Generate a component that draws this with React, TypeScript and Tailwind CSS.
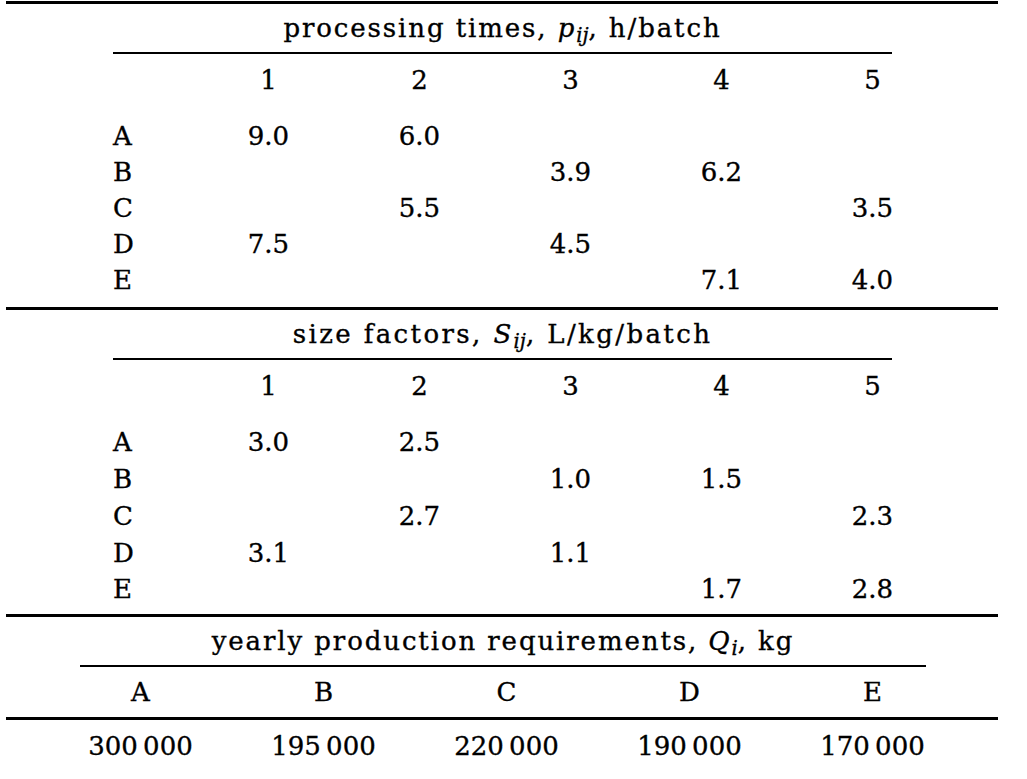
import React from "react";

type Row = { label: string; values: string[] };

const processing: Row[] = [
  { label: "A", values: ["9.0", "6.0", "", "", ""] },
  { label: "B", values: ["", "", "3.9", "6.2", ""] },
  { label: "C", values: ["", "5.5", "", "", "3.5"] },
  { label: "D", values: ["7.5", "", "4.5", "", ""] },
  { label: "E", values: ["", "", "", "7.1", "4.0"] },
];

const sizeFactors: Row[] = [
  { label: "A", values: ["3.0", "2.5", "", "", ""] },
  { label: "B", values: ["", "", "1.0", "1.5", ""] },
  { label: "C", values: ["", "2.7", "", "", "2.3"] },
  { label: "D", values: ["3.1", "", "1.1", "", ""] },
  { label: "E", values: ["", "", "", "1.7", "2.8"] },
];

const production = [
  { label: "A", value: "300\u2009000" },
  { label: "B", value: "195\u2009000" },
  { label: "C", value: "220\u2009000" },
  { label: "D", value: "190\u2009000" },
  { label: "E", value: "170\u2009000" },
];

const units = ["1", "2", "3", "4", "5"];

function ThickRule() {
  return <div className="h-[3px] w-full bg-black" />;
}

function Title({ children, tracking }: { children: React.ReactNode; tracking: string }) {
  return (
    <div
      className={`ml-[107px] w-[779px] h-[48px] flex items-center justify-center whitespace-nowrap ${tracking}`}
    >
      {children}
    </div>
  );
}

function MatrixSection({
  title,
  tracking,
  rows,
  rowH,
}: {
  title: React.ReactNode;
  tracking: string;
  rows: Row[];
  rowH: string;
}) {
  return (
    <section>
      <ThickRule />
      <Title tracking={tracking}>{title}</Title>
      {/* thin rule under the title */}
      <div className="ml-[107px] w-[779px] h-[2px] bg-black" />
      <div className="pl-[107px] pt-[8px]">
        <div className="grid grid-cols-[80px_repeat(5,151px)] h-[36px] items-center">
          <div />
          {units.map((u) => (
            <div key={u} className="text-center">
              {u}
            </div>
          ))}
        </div>
        <div className="mt-[20px]">
          {rows.map((r) => (
            <div
              key={r.label}
              className={`grid grid-cols-[80px_repeat(5,151px)] items-center ${rowH}`}
            >
              <div>{r.label}</div>
              {r.values.map((v, i) => (
                <div key={i} className="text-center">
                  {v}
                </div>
              ))}
            </div>
          ))}
        </div>
      </div>
    </section>
  );
}

export default function App() {
  return (
    <div className="w-[1027px] h-[779px] bg-white text-black font-['DejaVu_Serif',serif] text-[26px] leading-none overflow-hidden [-webkit-text-stroke:0.35px_black]">
      <div className="ml-[6px] w-[992px] pt-[1px]">
        <MatrixSection
          title={
            <span>
              processing times, <i>p</i>
              <sub className="italic tracking-normal">ij</sub>, h/batch
            </span>
          }
          tracking="tracking-[1.9px]"
          rows={processing}
          rowH="h-[36px] last:mb-[9px]"
        />
        <MatrixSection
          title={
            <span>
              size factors, <i>S</i>
              <sub className="italic tracking-normal">ij</sub>, L/kg/batch
            </span>
          }
          tracking="tracking-[2.4px]"
          rows={sizeFactors}
          rowH="h-[36.75px] last:mb-[6px]"
        />

        {/* yearly production */}
        <section>
          <ThickRule />
          <div className="ml-[74px] w-[846px] h-[48px] flex items-center justify-center whitespace-nowrap tracking-[1.9px]">
            <span>
              yearly production requirements, <i>Q</i>
              <sub className="italic tracking-normal">i</sub>, kg
            </span>
          </div>
          <div className="ml-[74px] w-[846px] h-[2px] bg-black" />
          <div className="pl-[43px] grid grid-cols-[repeat(5,183px)] h-[50px] items-center">
            {production.map((p) => (
              <div key={p.label} className="text-center">
                {p.label}
              </div>
            ))}
          </div>
          <ThickRule />
          <div className="pl-[43px] grid grid-cols-[repeat(5,183px)] h-[52px] items-center">
            {production.map((p) => (
              <div key={p.label} className="text-center">
                {p.value}
              </div>
            ))}
          </div>
        </section>
      </div>
    </div>
  );
}
